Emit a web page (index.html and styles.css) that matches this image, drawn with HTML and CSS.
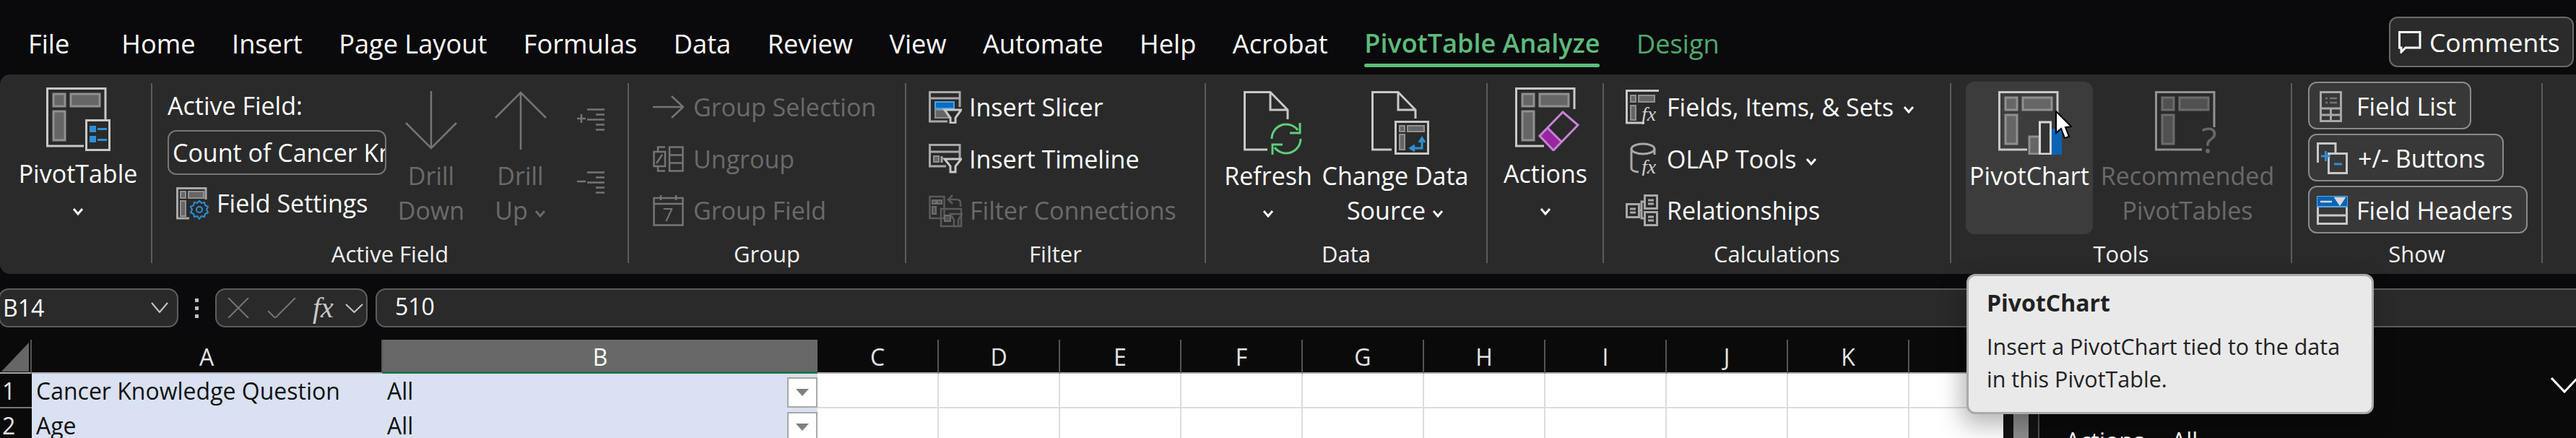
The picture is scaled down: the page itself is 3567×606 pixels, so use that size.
FILE: index.html
```html
<!DOCTYPE html>
<html>
  <head>
    <title>PivotTable Analyze</title>
    <link rel="stylesheet" href="styles.css">
  </head>
  <body>
    <svg class="defs" width="0" height="0">
      <defs>
        <g id="cells">
          <rect class="cell" x="10" y="9" width="16" height="17"/>
          <rect class="cell" x="34" y="9" width="40" height="17"/>
          <rect class="cell" x="10" y="33" width="16" height="40"/>
        </g>
        <path id="chev" class="chev" d="M2 2 L8 9 L14 2"/>
        <g id="minicells">
          <rect class="cell thin" x="6" y="6" width="7" height="9"/>
          <rect class="cell thin" x="17" y="6" width="21" height="9"/>
          <rect class="cell thin" x="6" y="19" width="7" height="21"/>
        </g>
      </defs>
    </svg>

    <div class="page">
      <div class="tabs">
        <span class="tab file">File</span>
        <span class="tab">Home</span>
        <span class="tab">Insert</span>
        <span class="tab">Page Layout</span>
        <span class="tab">Formulas</span>
        <span class="tab">Data</span>
        <span class="tab">Review</span>
        <span class="tab">View</span>
        <span class="tab">Automate</span>
        <span class="tab">Help</span>
        <span class="tab">Acrobat</span>
        <span class="tab active">PivotTable Analyze</span>
        <span class="tab context">Design</span>
        <button class="comments">
          <svg width="32" height="31" viewBox="0 0 32 31"><path class="ln white" d="M1.5 1.5 H30 V23 H10 L4 29 V23 H1.5 Z"/></svg>
          Comments
        </button>
      </div>

      <div class="ribbon">
        <!-- PivotTable -->
        <section class="group g-pivot">
          <div class="body">
            <div class="big tall w-pivot">
              <div class="art">
                <svg width="89" height="88" viewBox="0 0 89 88">
                  <path class="ln" d="M82 44 V1.5 H1.5 V81 H52"/>
                  <use href="#cells"/>
                  <rect class="ln" x="55.5" y="45.5" width="32" height="41"/>
                  <rect class="blue" x="60" y="53" width="9" height="9"/>
                  <rect class="blue" x="60" y="67" width="9" height="9"/>
                  <rect class="blue" x="71" y="56" width="13" height="3"/>
                  <rect class="blue" x="71" y="71" width="13" height="3"/>
                </svg>
              </div>
              <span class="line">PivotTable</span>
              <span class="line"><svg class="down" width="16" height="11"><use href="#chev"/></svg></span>
            </div>
          </div>
        </section>

        <!-- Active Field -->
        <section class="group g-active">
          <div class="body">
            <div class="field-col">
              <div class="field-label">Active Field:</div>
              <div class="field-input"><span>Count of Cancer Kn</span></div>
              <div class="row field-settings">
                <svg width="46" height="45" viewBox="0 0 46 45">
                  <path class="ln mid" d="M18 43 H1.5 V1.5 H41 V17"/>
                  <use href="#minicells"/>
                  <path class="bl" d="M32 19 L35 22 L39 21 L40 25 L44 27 L42 31 L44 35 L40 37 L39 41 L35 40 L32 44 L29 40 L25 41 L24 37 L20 35 L22 31 L20 27 L24 25 L25 21 L29 22 Z"/>
                  <circle class="bl" cx="32" cy="31" r="4"/>
                </svg>
                <span>Field Settings</span>
              </div>
            </div>
            <div class="big off w-drilldown">
              <div class="art">
                <svg width="72" height="81" viewBox="0 0 72 81"><path class="ln dimline" d="M36 0 V79 M1 44 L36 79 L71 44"/></svg>
              </div>
              <span class="line">Drill</span>
              <span class="line">Down</span>
            </div>
            <div class="big off w-drillup">
              <div class="art">
                <svg width="72" height="81" viewBox="0 0 72 81"><path class="ln dimline" d="M36 81 V2 M1 37 L36 2 L71 37"/></svg>
              </div>
              <span class="line">Drill</span>
              <span class="line">Up <svg class="down" width="16" height="11"><use href="#chev"/></svg></span>
            </div>
            <div class="expand-col">
              <svg width="38" height="31" viewBox="0 0 38 31"><path class="ln dimline" d="M0 14 H12 M6 8 V20 M14 1.5 H38 M26 8.5 H38 M14 15.5 H38 M26 22.5 H38 M26 29.5 H38"/></svg>
              <svg width="38" height="31" viewBox="0 0 38 31"><path class="ln dimline" d="M0 14 H12 M14 1.5 H38 M26 8.5 H38 M14 15.5 H38 M26 22.5 H38 M26 29.5 H38"/></svg>
            </div>
          </div>
          <div class="label">Active Field</div>
        </section>

        <!-- Group -->
        <section class="group g-group">
          <div class="rows">
            <div class="row off">
              <svg width="43" height="32" viewBox="0 0 43 32"><path class="ln dimline" d="M0 16 H42 M26 1 L42 16 L26 31"/></svg>
              <span>Group Selection</span>
            </div>
            <div class="row off">
              <svg width="43" height="36" viewBox="0 0 43 36">
                <path class="ln dimline" d="M7 8 V1.5 H17 M1.5 8 H17 V28 H1.5 Z M7 28 V34.5 H17 M5 24 L13 12 M23 1.5 H41.5 V34.5 H23 Z M23 12.5 H41.5 M23 23.5 H41.5"/>
              </svg>
              <span>Ungroup</span>
            </div>
            <div class="row off">
              <svg width="43" height="43" viewBox="0 0 43 43">
                <path class="ln dimline" d="M1.5 4 H41.5 V41.5 H1.5 Z M1.5 12 H41.5 M11 0 V7 M32 0 V7"/>
                <text class="cal" x="21" y="36">7</text>
              </svg>
              <span>Group Field</span>
            </div>
          </div>
          <div class="label">Group</div>
        </section>

        <!-- Filter -->
        <section class="group g-filter">
          <div class="rows">
            <div class="row">
              <svg width="46" height="45" viewBox="0 0 46 45">
                <path class="ln mid" d="M26 42 H1.5 V1.5 H43 V22"/>
                <path class="ln mid" d="M1.5 10 H43"/>
                <rect class="bluefill" x="9" y="15" width="26" height="9"/>
                <rect class="cell thin" x="9" y="26" width="18" height="11"/>
                <path class="funnel" d="M22 26 H45 L37 37 V44 H30 V37 Z"/>
              </svg>
              <span>Insert Slicer</span>
            </div>
            <div class="row">
              <svg width="46" height="41" viewBox="0 0 46 41">
                <path class="ln mid" d="M24 31 H1.5 V1.5 H43 V20"/>
                <path class="ln mid" d="M1.5 11 H43"/>
                <rect class="cell thin" x="7" y="17" width="7" height="8"/>
                <path class="ln mid" d="M18 17 V26"/>
                <path class="funnel" d="M22 21 H45 L37 31 V39 H30 V31 Z"/>
              </svg>
              <span>Insert Timeline</span>
            </div>
            <div class="row off">
              <svg class="faded" width="47" height="47" viewBox="0 0 47 47">
                <rect class="ln dimline" x="1.5" y="4" width="20" height="30"/>
                <rect class="cell thin" x="5" y="9" width="5" height="5"/>
                <rect class="cell thin" x="12" y="9" width="6" height="5"/>
                <rect class="cell thin" x="5" y="18" width="5" height="10"/>
                <path class="ln dimline" d="M44 18 V13 Q44 8 38 8 H28 M33 2 L27 8 L33 14"/>
                <rect class="ln dimline" x="17" y="21" width="28" height="24"/>
                <rect class="cell thin" x="22" y="30" width="8" height="8"/>
                <path class="funnel gray" d="M30 28 H46 L41 36 V45 H35 V36 Z"/>
              </svg>
              <span>Filter Connections</span>
            </div>
          </div>
          <div class="label">Filter</div>
        </section>

        <!-- Data -->
        <section class="group g-data">
          <div class="body">
            <div class="big w-refresh">
              <div class="art">
                <svg class="art-refresh" width="81" height="89" viewBox="0 0 81 89">
                  <path class="ln" d="M61 39 V26 L37 1.5 H1.5 V81 H33 M37 1.5 V26 H61"/>
                  <path class="gr" d="M39 66 A20 20 0 0 1 75 54 M78 44 V58 H64"/>
                  <path class="gr" d="M79 66 A20 20 0 0 1 43 78 M40 88 V74 H54"/>
                </svg>
              </div>
              <span class="line">Refresh</span>
              <span class="line"><svg class="down" width="16" height="11"><use href="#chev"/></svg></span>
            </div>
            <div class="big w-change">
              <div class="art">
                <svg class="art-change" width="81" height="88" viewBox="0 0 81 88">
                  <path class="ln" d="M61 38 V26 L37 1.5 H1.5 V81 H28 M37 1.5 V26 H61"/>
                  <rect class="ln" x="33.5" y="42.5" width="45" height="44"/>
                  <rect class="cell thin" x="39" y="48" width="7" height="8"/>
                  <rect class="cell thin" x="50" y="48" width="23" height="8"/>
                  <rect class="cell thin" x="39" y="60" width="7" height="21"/>
                  <path class="bl thick" d="M70 66 V79 H56 M66 71 L70 65 L74 71 M60 75 L54 79 L60 83"/>
                </svg>
              </div>
              <span class="line">Change Data</span>
              <span class="line">Source <svg class="down" width="16" height="11"><use href="#chev"/></svg></span>
            </div>
          </div>
          <div class="label">Data</div>
        </section>

        <!-- Actions -->
        <section class="group g-actions">
          <div class="body">
            <div class="big tall w-actions">
              <div class="art">
                <svg class="art-actions" width="89" height="88" viewBox="0 0 89 88">
                  <path class="ln" d="M82 30 V1.5 H1.5 V81 H40"/>
                  <use href="#cells"/>
                  <path class="er-fill" d="M34 67 L45 56 L64 75 L53 87 Z"/>
                  <path class="er-line" d="M34 67 L66 34 L87 52 L53 87 Z M45 56 L64 75"/>
                </svg>
              </div>
              <span class="line">Actions</span>
              <span class="line"><svg class="down" width="16" height="11"><use href="#chev"/></svg></span>
            </div>
          </div>
        </section>

        <!-- Calculations -->
        <section class="group g-calc">
          <div class="rows">
            <div class="row">
              <svg width="48" height="48" viewBox="0 0 48 48">
                <path class="ln" d="M26 46 H1.5 V1.5 H46"/>
                <rect class="cell thin" x="7" y="8" width="7" height="9"/>
                <rect class="cell thin" x="18" y="8" width="22" height="9"/>
                <rect class="cell thin" x="7" y="22" width="7" height="20"/>
                <text class="fx" x="22" y="43">fx</text>
              </svg>
              <span>Fields, Items, &amp; Sets <svg class="down" width="16" height="11"><use href="#chev"/></svg></span>
            </div>
            <div class="row">
              <svg width="48" height="46" viewBox="0 0 48 46">
                <path class="ln mid" d="M8 9 V36 Q8 40 18 41 M40 9 V17"/>
                <ellipse class="ln mid" cx="24" cy="9" rx="16" ry="7"/>
                <text class="fx" x="22" y="43">fx</text>
              </svg>
              <span>OLAP Tools <svg class="down" width="16" height="11"><use href="#chev"/></svg></span>
            </div>
            <div class="row">
              <svg width="48" height="44" viewBox="0 0 48 44">
                <rect class="ln mid" x="26.5" y="1.5" width="17" height="18"/>
                <rect class="ln mid" x="1.5" y="13.5" width="17" height="18"/>
                <rect class="ln mid" x="26.5" y="24.5" width="17" height="18"/>
                <path class="ln mid" d="M18 22 H22 V10 H26 M22 22 V33 H26 M31 8 H39 M31 13 H39 M6 20 H14 M6 25 H14 M31 31 H39 M31 36 H39"/>
              </svg>
              <span>Relationships</span>
            </div>
          </div>
          <div class="label">Calculations</div>
        </section>

        <!-- Tools -->
        <section class="group g-tools">
          <div class="body">
            <div class="big hover w-chart">
              <div class="art">
                <svg class="art-chart" width="90" height="88" viewBox="0 0 90 88">
                  <path class="ln" d="M82 60 V1.5 H1.5 V81 H40"/>
                  <use href="#cells"/>
                  <rect class="cell" x="43" y="63" width="14" height="24"/>
                  <rect class="bar-blue" x="73" y="52" width="15" height="36"/>
                  <rect class="bar-line" x="57.5" y="43" width="15" height="44"/>
                </svg>
              </div>
              <span class="line">PivotChart</span>
            </div>
            <div class="big off w-rec">
              <div class="art">
                <svg class="faded" width="90" height="88" viewBox="0 0 90 88">
                  <path class="ln" d="M82 50 V1.5 H1.5 V81 H65"/>
                  <use href="#cells"/>
                  <text class="qmark" x="75" y="86">?</text>
                </svg>
              </div>
              <span class="line">Recommended</span>
              <span class="line">PivotTables</span>
            </div>
          </div>
          <div class="label">Tools</div>
        </section>

        <!-- Show -->
        <section class="group g-show">
          <div class="rows show-rows">
            <div class="toggle t-list">
              <svg width="31" height="43" viewBox="0 0 31 43">
                <path class="ln mid" d="M1.5 1.5 H29.5 V41.5 H1.5 Z M1.5 24 H29.5 M1.5 33 H29.5 M15.5 24 V41.5"/>
                <path class="ln dimline" d="M8 10 H11 M14 10 H24 M8 16 H11 M14 16 H24"/>
              </svg>
              <span>Field List</span>
            </div>
            <div class="toggle t-buttons">
              <svg width="43" height="44" viewBox="0 0 43 44">
                <path class="ln" d="M1.5 28 V1.5 H26 V14"/>
                <rect class="ln" x="16.5" y="15.5" width="25" height="27"/>
                <path class="bl thick" d="M6 19 H19 M12.5 12 V26 M24 30 H35"/>
              </svg>
              <span>+/- Buttons</span>
            </div>
            <div class="toggle t-headers">
              <svg width="43" height="40" viewBox="0 0 43 40">
                <rect class="head-fill" x="0" y="0" width="43" height="15"/>
                <path class="head-mark" d="M5 8 H21 M26 3 H38 L32 12 Z"/>
                <path class="ln" d="M1.5 16 V38.5 H41.5 V16 M1.5 27 H41.5"/>
              </svg>
              <span>Field Headers</span>
            </div>
          </div>
          <div class="label">Show</div>
        </section>
      </div>

      <div class="formula-bar">
        <div class="name-box">
          <span>B14</span>
          <svg width="24" height="15" viewBox="0 0 24 15"><path class="thinline" d="M1 1 L12 14 L23 1"/></svg>
        </div>
        <div class="dots"><i></i><i></i><i></i></div>
        <div class="fx-box">
          <svg width="30" height="28" viewBox="0 0 30 28"><path class="ln dimline thin-x" d="M1 0 L29 28 M29 0 L1 28"/></svg>
          <svg width="40" height="28" viewBox="0 0 40 28"><path class="ln dimline thin-x" d="M1 18 L11 28 L39 0"/></svg>
          <span class="fx-label">fx</span>
          <svg width="25" height="13" viewBox="0 0 25 13"><path class="thinline" d="M1 1 L12.5 12 L24 1"/></svg>
        </div>
        <div class="formula-input">510</div>
      </div>

      <div class="sheet">
        <div class="grid-wrap">
          <div class="grid">
            <div class="corner"><i></i></div>
            <div class="col">A</div>
            <div class="col selected">B</div>
            <div class="col">C</div>
            <div class="col">D</div>
            <div class="col">E</div>
            <div class="col">F</div>
            <div class="col">G</div>
            <div class="col">H</div>
            <div class="col">I</div>
            <div class="col">J</div>
            <div class="col">K</div>
            <div class="col"></div>

            <div class="rownum">1</div>
            <div class="cell-box shade">Cancer Knowledge Question</div>
            <div class="cell-box shade">All<span class="filter"><i></i></span></div>
            <div class="cell-box"></div><div class="cell-box"></div><div class="cell-box"></div><div class="cell-box"></div><div class="cell-box"></div>
            <div class="cell-box"></div><div class="cell-box"></div><div class="cell-box"></div><div class="cell-box"></div><div class="cell-box"></div>

            <div class="rownum">2</div>
            <div class="cell-box shade">Age</div>
            <div class="cell-box shade">All<span class="filter"><i></i></span></div>
            <div class="cell-box"></div><div class="cell-box"></div><div class="cell-box"></div><div class="cell-box"></div><div class="cell-box"></div>
            <div class="cell-box"></div><div class="cell-box"></div><div class="cell-box"></div><div class="cell-box"></div><div class="cell-box"></div>
          </div>
        </div>
        <div class="vscroll"><div class="thumb"></div></div>
        <div class="panel">
          <svg class="panel-chev" width="38" height="22" viewBox="0 0 38 22"><path class="ln white" d="M1 1 L19 20 L37 1"/></svg>
          <div class="panel-row"><span>Actions</span><span>All</span></div>
        </div>
      </div>

      <div class="tooltip">
        <h4>PivotChart</h4>
        <p>Insert a PivotChart tied to the data<br>in this PivotTable.</p>
      </div>

      <svg class="cursor" width="23" height="40" viewBox="0 0 23 40">
        <path d="M1 1 V31 L8 25 L13 38 L19 36 L14 23 L22 22 Z"/>
      </svg>
    </div>
  </body>
</html>
```

FILE: styles.css
```css
/* Excel ribbon, dark theme */
html, body {
  margin: 0;
  padding: 0;
  background-color: #0a090b;
}

.defs {
  position: absolute;
}

.page {
  position: relative;
  width: 3567px;
  height: 606px;
  overflow: hidden;
  font-family: "Open Sans", "Noto Sans", sans-serif;
  color: #fff;
  background-color: #0a090b;
}

/* tabs */
.tabs {
  display: flex;
  align-items: flex-start;
  height: 103px;
  padding: 23px 3px 0 39px;
  box-sizing: border-box;
}

.tab {
  margin-top: 13px;
  margin-right: 50.5px;
  font-size: 36.2px;
  line-height: 48px;
  white-space: nowrap;
}

.tab.file {
  margin-right: 72px;
}

.tab.active {
  color: #5dbb7b;
  font-weight: 600;
  font-size: 36px;
}

.tab.active::after {
  content: "";
  display: block;
  height: 5px;
  margin-top: 4px;
  border-radius: 3px;
  background-color: #5dbb7b;
}

.tab.context {
  color: #4fa96d;
}

.comments {
  display: flex;
  align-items: center;
  gap: 11px;
  width: 256px;
  height: 70px;
  margin-left: auto;
  padding: 0 0 0 11px;
  box-sizing: border-box;
  border: 2px solid #6b6b6b;
  border-radius: 12px;
  background-color: #2b2b2b;
  color: #fff;
  font-family: inherit;
  font-size: 35.5px;
}

/* ribbon */
.ribbon {
  display: flex;
  height: 276px;
  padding-top: 12px;
  box-sizing: border-box;
  border-radius: 14px 0 0 14px;
  background-color: #2a2a2a;
  font-size: 34px;
}

.group {
  display: flex;
  flex-direction: column;
  height: 249px;
  box-sizing: border-box;
  border-right: 2px solid #5c5c5c;
}

.g-pivot { width: 211px; }
.g-active { width: 660px; }
.g-group { width: 384px; padding-left: 33px; }
.g-filter { width: 415px; padding-left: 31px; }
.g-data { width: 390px; padding-left: 27px; }
.g-actions { width: 161px; }
.g-calc { width: 481px; padding-left: 30px; }
.g-tools { width: 472px; padding-left: 20px; }
.g-show { width: 347px; padding-left: 22px; }

.body {
  display: flex;
  flex: 1;
  min-height: 0;
}

.label {
  height: 32px;
  margin-bottom: -3px;
  font-size: 31px;
  line-height: 32px;
  text-align: center;
  color: #f0f0f0;
}

.g-group .label { margin-left: -33px; }
.g-filter .label { margin-left: -31px; }
.g-data .label { margin-left: -27px; }
.g-calc .label { margin-left: -30px; }
.g-tools .label { margin-left: -20px; }
.g-show .label { margin-left: -22px; }

/* large buttons */
.big {
  display: flex;
  flex-direction: column;
  align-items: center;
  flex-shrink: 0;
}

.art {
  height: 94px;
  padding-top: 11px;
}

.tall .art {
  height: 96px;
  padding-top: 6px;
}

.line {
  height: 47.5px;
  line-height: 47.5px;
  white-space: nowrap;
}

.line .down {
  vertical-align: 3px;
}

.off {
  color: #6a6a6a;
}

.hover {
  margin-top: -2px;
  height: 211px;
  border-radius: 12px;
  background-color: #3c3c3c;
}

.hover .art {
  padding-top: 13px;
}

.w-pivot { width: 204px; padding-left: 6px; }
.w-drilldown { width: 124px; }
.w-drillup { width: 123px; }
.w-refresh { width: 118px; }
.w-change { width: 234px; }
.w-actions { width: 160px; }
.w-chart { width: 176px; }
.w-rec { width: 262px; }

.art-refresh { margin-left: 12px; }
.art-change { margin-left: 14px; }
.art-actions { margin-left: 4px; }
.art-chart { margin-left: 4px; }

/* small rows */
.rows {
  display: flex;
  flex: 1;
  flex-direction: column;
  gap: 5.5px;
}

.row {
  display: flex;
  align-items: center;
  gap: 11px;
  height: 66px;
  white-space: nowrap;
}

.row > svg {
  flex-shrink: 0;
}

.row .down {
  margin-left: 4px;
  vertical-align: 4px;
}

.g-group .row { gap: 13px; }
.g-filter .row { gap: 10px; }
.g-calc .row { gap: 9px; }

/* active field column */
.field-col {
  width: 303px;
  margin-left: 21px;
  flex-shrink: 0;
}

.field-label {
  height: 62px;
  line-height: 62px;
}

.field-input {
  height: 62px;
  margin-top: 3px;
  padding: 0 2px 0 5px;
  box-sizing: border-box;
  border: 2px solid #767676;
  border-radius: 12px;
  line-height: 58px;
  overflow: hidden;
  white-space: nowrap;
}

.field-settings {
  height: 70px;
  margin-top: 4px;
  padding-left: 12px;
  gap: 10px;
}

.expand-col {
  display: flex;
  flex-direction: column;
  gap: 56px;
  margin-left: 17px;
  padding-top: 35px;
}

/* toggles in the Show group */
.show-rows {
  margin-top: -2px;
  gap: 6px;
}

.toggle {
  display: flex;
  align-items: center;
  height: 66px;
  padding-top: 2px;
  box-sizing: border-box;
  border: 2px solid #8a8a8a;
  border-radius: 12px;
  background-color: #383838;
  white-space: nowrap;
}

.t-list { width: 226px; padding-left: 14px; gap: 20px; }
.t-buttons { width: 271px; padding-left: 10px; gap: 14px; }
.t-headers { width: 304px; padding-left: 10px; gap: 12px; }

/* svg parts */
.ln {
  fill: none;
  stroke: #c8c8c8;
  stroke-width: 3;
}

.ln.white { stroke: #fff; }
.ln.mid { stroke: #a8a8a8; }
.ln.dimline { stroke: #757575; stroke-width: 2.5; }
.ln.thin-x { stroke-width: 2; }

.cell {
  fill: #666;
  stroke: #909090;
  stroke-width: 3;
}

.cell.thin { stroke-width: 2; }

.chev {
  fill: none;
  stroke: currentColor;
  stroke-width: 3;
}

.blue { fill: #2d8fd5; }
.bluefill { fill: #0a6cc4; stroke: #4aa3e0; stroke-width: 2; }

.bl {
  fill: none;
  stroke: #2d8fd5;
  stroke-width: 2;
}

.bl.thick { stroke-width: 3; }

.gr {
  fill: none;
  stroke: #5fcf7b;
  stroke-width: 3;
}

.funnel {
  fill: #2a2a2a;
  stroke: #c8c8c8;
  stroke-width: 3;
}

.funnel.gray { stroke: #757575; stroke-width: 2.5; }

.er-fill { fill: #96279f; }
.er-line { fill: none; stroke: #c984d6; stroke-width: 3; }

.bar-blue { fill: #0a64b5; }
.bar-line { fill: #2a2a2a; fill-opacity: .5; stroke: #d8d8d8; stroke-width: 3; }

.head-fill { fill: #0a64b5; stroke: #5aa9e6; stroke-width: 2; }
.head-mark { fill: #d8d8d8; stroke: #d8d8d8; stroke-width: 2.5; }

.thinline {
  fill: none;
  stroke: #c8c8c8;
  stroke-width: 2;
}

.faded { opacity: .65; }

.fx {
  fill: #d0d0d0;
  font-family: "Liberation Serif", serif;
  font-style: italic;
  font-size: 28px;
}

.cal {
  fill: #757575;
  font-size: 26px;
  text-anchor: middle;
}

.qmark {
  fill: #8a8a8a;
  font-size: 50px;
  text-anchor: middle;
}

/* formula bar */
.formula-bar {
  display: flex;
  align-items: stretch;
  height: 54px;
  margin-top: 20px;
}

.name-box,
.fx-box,
.formula-input {
  box-sizing: border-box;
  border: 2px solid #5e5e5e;
  border-radius: 14px;
  background-color: #2a2a2a;
}

.name-box {
  display: flex;
  align-items: center;
  justify-content: space-between;
  width: 249px;
  margin-left: -2px;
  padding: 0 12px 2px 4px;
  font-size: 32px;
}

.dots {
  display: flex;
  flex-direction: column;
  justify-content: center;
  gap: 6px;
  width: 51px;
  align-items: center;
}

.dots i {
  display: block;
  width: 5px;
  height: 5px;
  background-color: #c0c0c0;
}

.fx-box {
  display: flex;
  align-items: center;
  width: 211px;
  padding-left: 15px;
  gap: 25px;
}

.fx-label {
  width: 34px;
  margin-left: -2px;
  margin-right: -14px;
  font-family: "Liberation Serif", serif;
  font-style: italic;
  font-size: 40px;
  line-height: 40px;
  color: #c8c8c8;
}

.formula-input {
  flex: 1;
  margin-left: 11px;
  margin-right: -20px;
  padding-left: 25px;
  font-size: 32px;
  line-height: 46px;
}

/* sheet */
.sheet {
  display: flex;
  height: 136px;
  margin-top: 17px;
}

.grid-wrap {
  width: 2774px;
  overflow: hidden;
  flex-shrink: 0;
}

.grid {
  display: grid;
  grid-template-columns: 44px 486px 602px repeat(10, 168px);
  grid-template-rows: 47px 48px 48px;
  font-size: 32px;
}

.corner {
  position: relative;
  box-sizing: border-box;
  border-right: 2px solid #555;
  border-bottom: 2px solid #aaa;
  background-color: #0a0a0a;
}

.corner i {
  display: block;
  width: 38px;
  height: 40px;
  margin: 4px 0 0 2px;
  background-color: #666;
  clip-path: polygon(100% 0, 100% 100%, 0 100%);
}

.col {
  padding-top: 3px;
  box-sizing: border-box;
  border-right: 2px solid #555;
  border-bottom: 2px solid #aaa;
  background-color: #0a0a0a;
  color: #e4e4e4;
  line-height: 42px;
  text-align: center;
}

.col.selected {
  border-right: 0;
  border-bottom: 3px solid #217346;
  background-color: #686868;
  color: #fff;
}

.rownum {
  padding: 3px 0 0 3px;
  box-sizing: border-box;
  border-bottom: 2px solid #777;
  background-color: #0a0a0a;
  color: #e4e4e4;
  line-height: 42px;
}

.cell-box {
  display: flex;
  padding: 3px 0 0 6px;
  box-sizing: border-box;
  border-right: 2px solid #dcdcdc;
  border-bottom: 2px solid #dcdcdc;
  background-color: #fff;
  color: #111;
  line-height: 42px;
  white-space: nowrap;
}

.cell-box.shade {
  border: 0;
  background-color: #d9e1f2;
}

.filter {
  display: flex;
  align-items: center;
  justify-content: center;
  width: 42px;
  height: 42px;
  margin-left: auto;
  margin-top: 2px;
  box-sizing: border-box;
  border: 2px solid #a8a8a8;
  background-color: #fff;
}

.filter i {
  display: block;
  width: 18px;
  height: 10px;
  background-color: #7f7f7f;
  clip-path: polygon(0 0, 100% 0, 50% 100%);
}

.vscroll {
  width: 48px;
  flex-shrink: 0;
  background-color: #141414;
}

.thumb {
  width: 21px;
  height: 100%;
  margin-left: 14px;
  background-color: #8f8f8f;
}

.panel {
  flex: 1;
  overflow: hidden;
  border-left: 2px solid #555;
  background-color: #0a0a0a;
}

.panel-chev {
  display: block;
  margin: 52px 0 0 708px;
}

.panel-row {
  display: flex;
  margin-top: 46px;
  padding-left: 36px;
  font-size: 32px;
  line-height: 40px;
}

.panel-row span:first-child {
  width: 147px;
}

/* things on top */
.tooltip {
  position: absolute;
  left: 2723px;
  top: 379px;
  width: 564px;
  height: 194px;
  padding: 17px 25px 0;
  box-sizing: border-box;
  border: 3px solid #aaa;
  border-radius: 12px;
  background-color: #e9e9e9;
  color: #222;
  box-shadow: -6px 14px 34px rgba(0, 0, 0, .3);
  font-size: 30.5px;
}

.tooltip h4 {
  margin: 0 0 18px;
  font-size: 32px;
  line-height: 40px;
}

.tooltip p {
  margin: 0;
  line-height: 45px;
}

.cursor {
  position: absolute;
  left: 2846px;
  top: 153px;
}

.cursor path {
  fill: #fff;
  stroke: #000;
  stroke-width: 2;
}
```
